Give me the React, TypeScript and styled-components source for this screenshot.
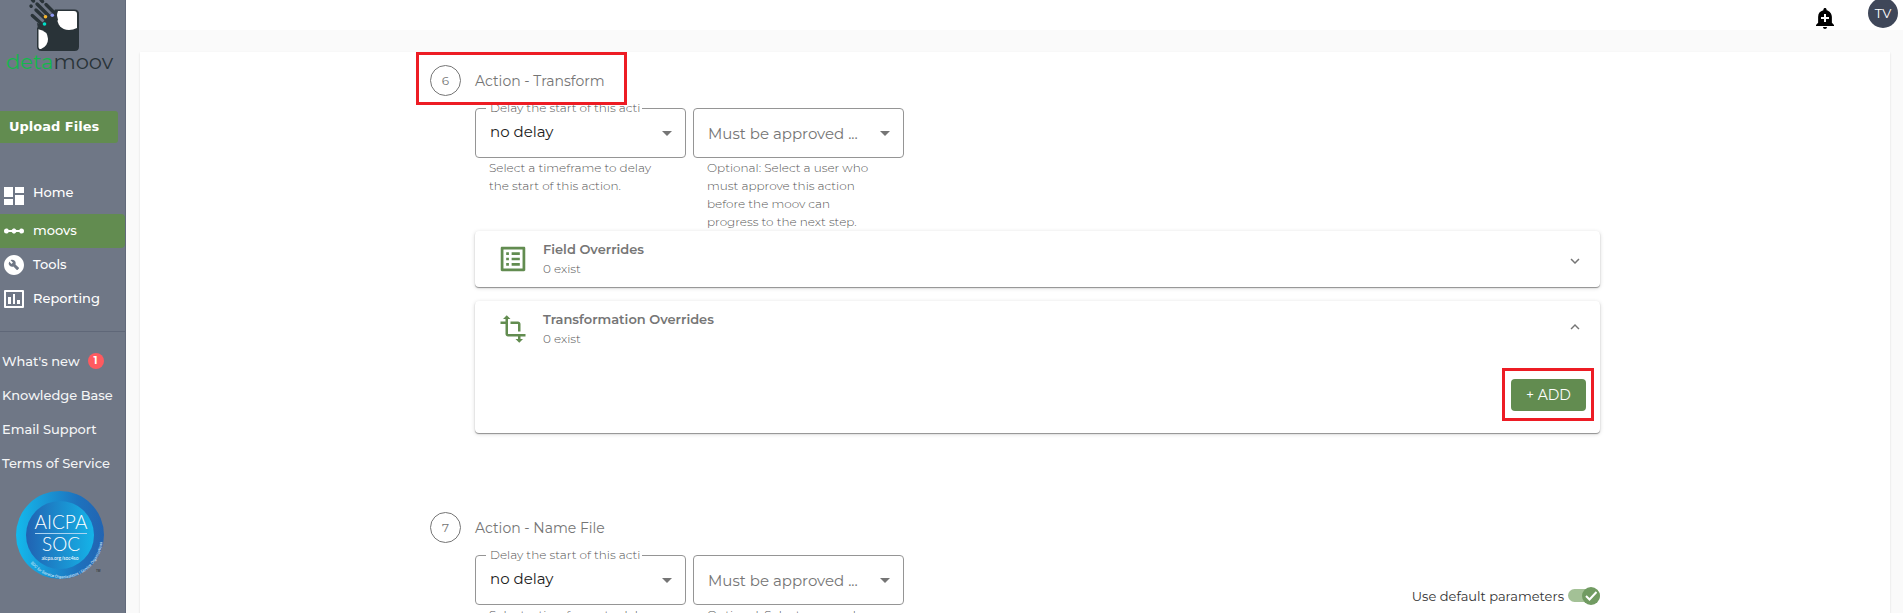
import React, { useState } from "react";
import styled, { createGlobalStyle } from "styled-components";
import {
  MdAddAlert,
  MdArrowDropDown,
  MdBuildCircle,
  MdKeyboardArrowDown,
  MdKeyboardArrowUp,
  MdLinearScale,
  MdListAlt,
  MdTransform,
} from "react-icons/md";

const green = "#628c50";
const muted = "#757575";

const GlobalStyle = createGlobalStyle`
  * { box-sizing: border-box; }
  body { margin: 0; background: #fafafa; }
  body, button, select, input {
    font-family: Montserrat, Inter, "Open Sans", sans-serif;
  }
`;

const Shell = styled.div`
  display: flex;
  height: 100vh;
  overflow: hidden;
`;

const Sidebar = styled.aside`
  flex: 0 0 126px;
  display: flex;
  flex-direction: column;
  background: #6f7786;
  border-right: 1px solid #626a7b;
  overflow: hidden;
`;

const LogoLink = styled.a`
  display: block;
  height: 74px;
  svg { display: block; }
`;

const UploadButton = styled.button`
  flex: none;
  width: 118px;
  height: 32px;
  margin: 37px 0 33px;
  padding: 0 0 2px 9px;
  border: 0;
  border-radius: 0 3px 3px 0;
  background: ${green};
  color: #fff;
  font-family: "DejaVu Sans", sans-serif;
  font-size: 13px;
  font-weight: 700;
  text-align: left;
  white-space: nowrap;
`;

const Nav = styled.nav`
  display: flex;
  flex-direction: column;
`;

const NavItem = styled.a<{ $active?: boolean }>`
  display: flex;
  align-items: center;
  gap: 7px;
  height: 34px;
  padding-left: 2px;
  border-radius: 0 4px 4px 0;
  background: ${(p) => (p.$active ? green : "transparent")};
  color: #fff;
  font-size: 13px;
  font-weight: 500;
  text-decoration: none;
  svg { flex: none; }
  span { padding-bottom: 2px; }
  &:first-child { margin-bottom: 4px; }
`;

const HelpNav = styled(Nav)`
  margin-top: 15px;
  padding-top: 12px;
  border-top: 1px solid #5f6778;
`;

const HelpLink = styled.a`
  display: flex;
  align-items: center;
  gap: 8px;
  height: 34px;
  padding-left: 2px;
  color: #f4f5f6;
  font-size: 13px;
  font-weight: 500;
  text-decoration: none;
  white-space: nowrap;
`;

const Count = styled.span`
  width: 16px;
  height: 16px;
  border-radius: 50%;
  background: #ff5a5f;
  color: #fff;
  font-size: 10px;
  font-weight: 700;
  line-height: 16px;
  text-align: center;
`;

const SocSeal = styled.svg`
  flex: none;
  margin: 11px 0 0 16px;
`;

const Content = styled.div`
  flex: 1;
  min-width: 0;
  display: flex;
  flex-direction: column;
`;

const TopBar = styled.header`
  flex: none;
  display: flex;
  justify-content: flex-end;
  align-items: flex-end;
  gap: 31px;
  height: 30px;
  padding-right: 5px;
  background: #fff;
`;

const IconButton = styled.button`
  display: flex;
  padding: 0;
  border: 0;
  background: none;
  color: #000;
`;

const Avatar = styled.button`
  width: 30px;
  height: 30px;
  margin-bottom: 2px;
  padding: 0;
  border: 0;
  border-radius: 50%;
  background: #3f4759;
  color: #fff;
  font-size: 13px;
`;

const Main = styled.main`
  flex: 1;
  min-height: 0;
  overflow: hidden;
  padding: 22px 13px 0 14px;
`;

const Card = styled.div`
  padding-top: 13px;
  background: #fff;
  box-shadow: 0 1px 2px rgba(0, 0, 0, 0.12);
`;

const Steps = styled.div`
  display: flex;
  flex-direction: column;
  gap: 79px;
  max-width: 1170px;
  margin: 0 auto;
`;

const Step = styled.section`
  display: flex;
  flex-direction: column;
`;

const StepHeader = styled.div`
  position: relative;
  align-self: flex-start;
  display: flex;
  align-items: center;
  gap: 14px;
  margin-bottom: 12px;
`;

const StepNumber = styled.span`
  width: 31px;
  height: 31px;
  border: 1px solid ${muted};
  border-radius: 50%;
  color: ${muted};
  font-size: 12px;
  line-height: 29px;
  text-align: center;
`;

const StepTitle = styled.h2`
  margin: 0;
  color: ${muted};
  font-size: 14px;
  font-weight: 400;
`;

const Highlight = styled.span<{ $inset: string }>`
  position: absolute;
  z-index: 2;
  inset: ${(p) => p.$inset};
  border: 3px solid #ed1c24;
  pointer-events: none;
`;

const StepBody = styled.div`
  margin-left: 45px;
`;

const FieldRow = styled.div`
  display: flex;
  align-items: flex-start;
  gap: 7px;
`;

const Field = styled.div`
  position: relative;
  width: 211px;
`;

const FieldLabel = styled.label`
  position: absolute;
  z-index: 1;
  top: -8px;
  left: 11px;
  width: 156px;
  padding: 0 2px 0 4px;
  background: #fff;
  color: #555;
  font-size: 12px;
  font-weight: 300;
  line-height: 16px;
  white-space: nowrap;
  span { display: block; overflow: hidden; }
`;

const SelectBox = styled.select<{ $placeholder?: boolean }>`
  display: block;
  appearance: none;
  width: 100%;
  height: 50px;
  padding: ${(p) => (p.$placeholder ? "1px 40px 0 14px" : "0 40px 3px 14px")};
  border: 1px solid #959595;
  border-radius: 4px;
  background: transparent;
  color: ${(p) => (p.$placeholder ? muted : "#212121")};
  font-size: 15px;
`;

const SelectArrow = styled(MdArrowDropDown)`
  position: absolute;
  top: 13px;
  right: 7px;
  color: ${muted};
  pointer-events: none;
`;

const Helper = styled.p`
  margin: 1px 0 0;
  padding: 0 30px 0 14px;
  color: #555;
  font-size: 12px;
  font-weight: 300;
  line-height: 18px;
`;

const Panels = styled.div`
  position: relative;
  display: flex;
  flex-direction: column;
  gap: 14px;
`;

const Panel = styled.section`
  border-radius: 4px;
  background: #fff;
  box-shadow: 0 1px 1px rgba(0, 0, 0, 0.38), 0 1px 4px rgba(0, 0, 0, 0.16);
`;

const PanelHeader = styled.button`
  display: flex;
  align-items: center;
  width: 100%;
  height: 56px;
  padding: 0 16px 0 23px;
  border: 0;
  background: none;
  color: ${muted};
  text-align: left;
`;

const PanelIcon = styled.span`
  display: flex;
  width: 45px;
  color: ${green};
`;

const PanelText = styled.span`
  flex: 1;
  display: flex;
  flex-direction: column;
  padding-bottom: 1px;
  font-size: 13px;
  line-height: 20px;
  strong { font-weight: 600; }
  span { color: #555; font-size: 12px; font-weight: 300; }
`;

const PanelChevron = styled.span<{ $open: boolean }>`
  display: flex;
  padding: ${(p) => (p.$open ? "0 0 4px" : "4px 0 0")};
`;

const PanelBody = styled.div`
  display: flex;
  justify-content: flex-end;
  padding: 22px 14px;
`;

const ButtonWrap = styled.div`
  position: relative;
`;

const AddButton = styled.button`
  width: 75px;
  height: 32px;
  padding: 0;
  border: 0;
  border-radius: 4px;
  background: ${green};
  color: #fff;
  font-size: 14px;
`;

const Toggle = styled.label`
  display: flex;
  align-items: center;
  gap: 4px;
  margin: 29px 0 0 auto;
  color: #333;
  font-size: 13px;
  line-height: 24px;
`;

const Switch = styled.span`
  position: relative;
  width: 32px;
  height: 20px;
  input {
    position: absolute;
    inset: 0;
    margin: 0;
    opacity: 0;
  }
  svg { display: block; overflow: visible; }
`;

function Logo() {
  return (
    <svg width="125" height="74" viewBox="0 0 125 74" role="img" aria-label="detamoov">
      <defs>
        <clipPath id="logo-square">
          <rect x="38.500" y="11" width="38.500" height="38.500" rx="3" />
        </clipPath>
      </defs>
      <path
        d="M55 9.500H74.500Q79 9.500 79 14V46.500Q79 51 74.500 51H41.500Q37 51 37 46.500V25L44 14Z"
        fill="#293338"
      />
      <g clipPath="url(#logo-square)" fill="#fff">
        <path d="M58 11H77V28Q73 30 69 30C61 30 57 24 57 17Q57 13 58 11Z" />
        <path d="M38 29Q48 31 48 39Q48 46 41 49H38Z" />
      </g>
      <path d="M35 6H52L55 10L37 28Z" fill="#6f7786" />
      <path d="M37 23L44 25L45 17L52 16L56 11L58 20L46 30L38 29Z" fill="#293338" />
      <g stroke="#293338" strokeWidth="3.4" strokeLinecap="round">
        <path d="M32.300 15.500L44 26" />
        <path d="M31 6L31.200 6.200" />
        <path d="M36 10L45.500 19" />
        <path d="M32.500 0L33.500 1" />
        <path d="M37 4L51 18" />
        <path d="M41 0L42.500 1.500" />
        <path d="M46 4.500L54 12.500" />
      </g>
      <circle cx="44.500" cy="24" r="1.800" fill="#00dfc8" />
      <circle cx="45.500" cy="16.700" r="1.800" fill="#f7b52b" />
      <circle cx="52.300" cy="15.300" r="1.800" fill="#8e99f3" />
      <text x="6" y="69" fontFamily="Montserrat, DejaVu Sans, sans-serif" fontSize="21" fill="#293338">
        <tspan fill="#14b84b">deta</tspan>moov
      </text>
    </svg>
  );
}

function HomeIcon() {
  return (
    <svg width="24" height="24" viewBox="0 0 24 24" fill="currentColor">
      <path d="M2 6h9v10H2zM2 18h9v6H2zM13 6h9v6h-9zM13 14h9v10h-9z" />
    </svg>
  );
}

function ReportIcon() {
  return (
    <svg width="24" height="24" viewBox="0 0 24 24" fill="currentColor">
      <path
        fillRule="evenodd"
        d="M3 3h18q1 0 1 1v16q0 1-1 1H3q-1 0-1-1V4q0-1 1-1zm1 2v14h16V5zM6 10h3v7H6zM11 7h2v10h-2zM15 13h3v4h-3z"
      />
    </svg>
  );
}

function Seal() {
  return (
    <SocSeal width="92" height="92" viewBox="0 0 92 92" role="img" aria-label="AICPA SOC">
      <defs>
        <linearGradient id="seal-ring">
          <stop offset="0" stopColor="#14b9ec" />
          <stop offset="0.7" stopColor="#1d72be" />
          <stop offset="1" stopColor="#2364b1" />
        </linearGradient>
        <linearGradient id="seal-disc">
          <stop offset="0" stopColor="#2162b2" />
          <stop offset="1" stopColor="#15b4e8" />
        </linearGradient>
        <path id="seal-arc" d="M14.500 72A40.500 40.500 0 0 0 83 30" />
      </defs>
      <circle cx="44" cy="44" r="44" fill="url(#seal-ring)" />
      <circle cx="44" cy="44" r="34" fill="url(#seal-disc)" />
      <g fill="#fff" fontFamily="Lato, sans-serif" fontWeight="300" textAnchor="middle">
        <text x="45" y="38" fontSize="19">AICPA</text>
        <text x="45" y="60" fontSize="19">SOC</text>
        <text x="44" y="69" fontSize="5" fontWeight="400">aicpa.org/soc4so</text>
      </g>
      <path d="M19 42.500H71" stroke="#a9d4f2" />
      <text fontFamily="Roboto, sans-serif" fontSize="4" fill="#e3f3fc">
        <textPath href="#seal-arc">SOC for Service Organizations | Service Organizations</textPath>
      </text>
      <text x="80" y="81" fontFamily="Roboto, sans-serif" fontSize="3" fill="#222">TM</text>
    </SocSeal>
  );
}

function ActionFields({ id, children }: { id: string; children?: React.ReactNode }) {
  return (
    <FieldRow>
      <Field>
        <FieldLabel htmlFor={`${id}-delay`}>
          <span>Delay the start of this action</span>
        </FieldLabel>
        <SelectBox id={`${id}-delay`}>
          <option>no delay</option>
        </SelectBox>
        <SelectArrow size={24} />
        <Helper>Select a timeframe to delay the start of this action.</Helper>
      </Field>
      <Field>
        <SelectBox $placeholder aria-label="Must be approved by">
          <option>Must be approved ...</option>
        </SelectBox>
        <SelectArrow size={24} />
        <Helper>
          Optional: Select a user who must approve this action before the moov can progress to the
          next step.
        </Helper>
      </Field>
      {children}
    </FieldRow>
  );
}

function Chevron({ open }: { open: boolean }) {
  return (
    <PanelChevron $open={open}>
      {open ? <MdKeyboardArrowUp size={18} /> : <MdKeyboardArrowDown size={18} />}
    </PanelChevron>
  );
}

export default function App() {
  const [fieldsOpen, setFieldsOpen] = useState(false);
  const [transformsOpen, setTransformsOpen] = useState(true);
  const [useDefaults, setUseDefaults] = useState(true);

  return (
    <>
      <GlobalStyle />
      <Shell>
        <Sidebar>
          <LogoLink href="#">
            <Logo />
          </LogoLink>
          <UploadButton>Upload Files</UploadButton>
          <Nav>
            <NavItem href="#home"><HomeIcon /><span>Home</span></NavItem>
            <NavItem href="#moovs" $active><MdLinearScale size={24} /><span>moovs</span></NavItem>
            <NavItem href="#tools"><MdBuildCircle size={24} /><span>Tools</span></NavItem>
            <NavItem href="#reporting"><ReportIcon /><span>Reporting</span></NavItem>
          </Nav>
          <HelpNav>
            <HelpLink href="#news">What's new <Count>1</Count></HelpLink>
            <HelpLink href="#kb">Knowledge Base</HelpLink>
            <HelpLink href="#support">Email Support</HelpLink>
            <HelpLink href="#terms">Terms of Service</HelpLink>
          </HelpNav>
          <Seal />
        </Sidebar>
        <Content>
          <TopBar>
            <IconButton aria-label="Notifications"><MdAddAlert size={24} /></IconButton>
            <Avatar>TV</Avatar>
          </TopBar>
          <Main>
            <Card>
              <Steps>
                <Step>
                  <StepHeader>
                    <StepNumber>6</StepNumber>
                    <StepTitle>Action - Transform</StepTitle>
                    <Highlight $inset="-13px -22px -9px -14px" />
                  </StepHeader>
                  <StepBody>
                    <ActionFields id="transform" />
                    <Panels>
                      <Panel>
                        <PanelHeader aria-expanded={fieldsOpen} onClick={() => setFieldsOpen(!fieldsOpen)}>
                          <PanelIcon><MdListAlt size={30} viewBox="1 1 22 22" /></PanelIcon>
                          <PanelText>
                            <strong>Field Overrides</strong>
                            <span>0 exist</span>
                          </PanelText>
                          <Chevron open={fieldsOpen} />
                        </PanelHeader>
                      </Panel>
                      <Panel>
                        <PanelHeader
                          aria-expanded={transformsOpen}
                          onClick={() => setTransformsOpen(!transformsOpen)}
                        >
                          <PanelIcon><MdTransform size={30} /></PanelIcon>
                          <PanelText>
                            <strong>Transformation Overrides</strong>
                            <span>0 exist</span>
                          </PanelText>
                          <Chevron open={transformsOpen} />
                        </PanelHeader>
                        {transformsOpen && (
                          <PanelBody>
                            <ButtonWrap>
                              <AddButton>+ ADD</AddButton>
                              <Highlight $inset="-11px -8px -10px -9px" />
                            </ButtonWrap>
                          </PanelBody>
                        )}
                      </Panel>
                    </Panels>
                  </StepBody>
                </Step>
                <Step>
                  <StepHeader>
                    <StepNumber>7</StepNumber>
                    <StepTitle>Action - Name File</StepTitle>
                  </StepHeader>
                  <StepBody>
                    <ActionFields id="name-file">
                      <Toggle>
                        Use default parameters
                        <Switch>
                          <input
                            type="checkbox"
                            checked={useDefaults}
                            onChange={(e) => setUseDefaults(e.target.checked)}
                          />
                          <svg width="32" height="20" viewBox="0 0 32 20">
                            <rect y="3" width="32" height="13" rx="6.500" fill={useDefaults ? "#a3c196" : "#bbb"} />
                            <circle cx={useDefaults ? 23 : 9} cy="10" r="9" fill={useDefaults ? "#719b62" : "#eee"} />
                            {useDefaults && (
                              <path d="M18 10l3.500 3.500L28.500 6" fill="none" stroke="#fff" strokeWidth="2" />
                            )}
                          </svg>
                        </Switch>
                      </Toggle>
                    </ActionFields>
                  </StepBody>
                </Step>
              </Steps>
            </Card>
          </Main>
        </Content>
      </Shell>
    </>
  );
}
